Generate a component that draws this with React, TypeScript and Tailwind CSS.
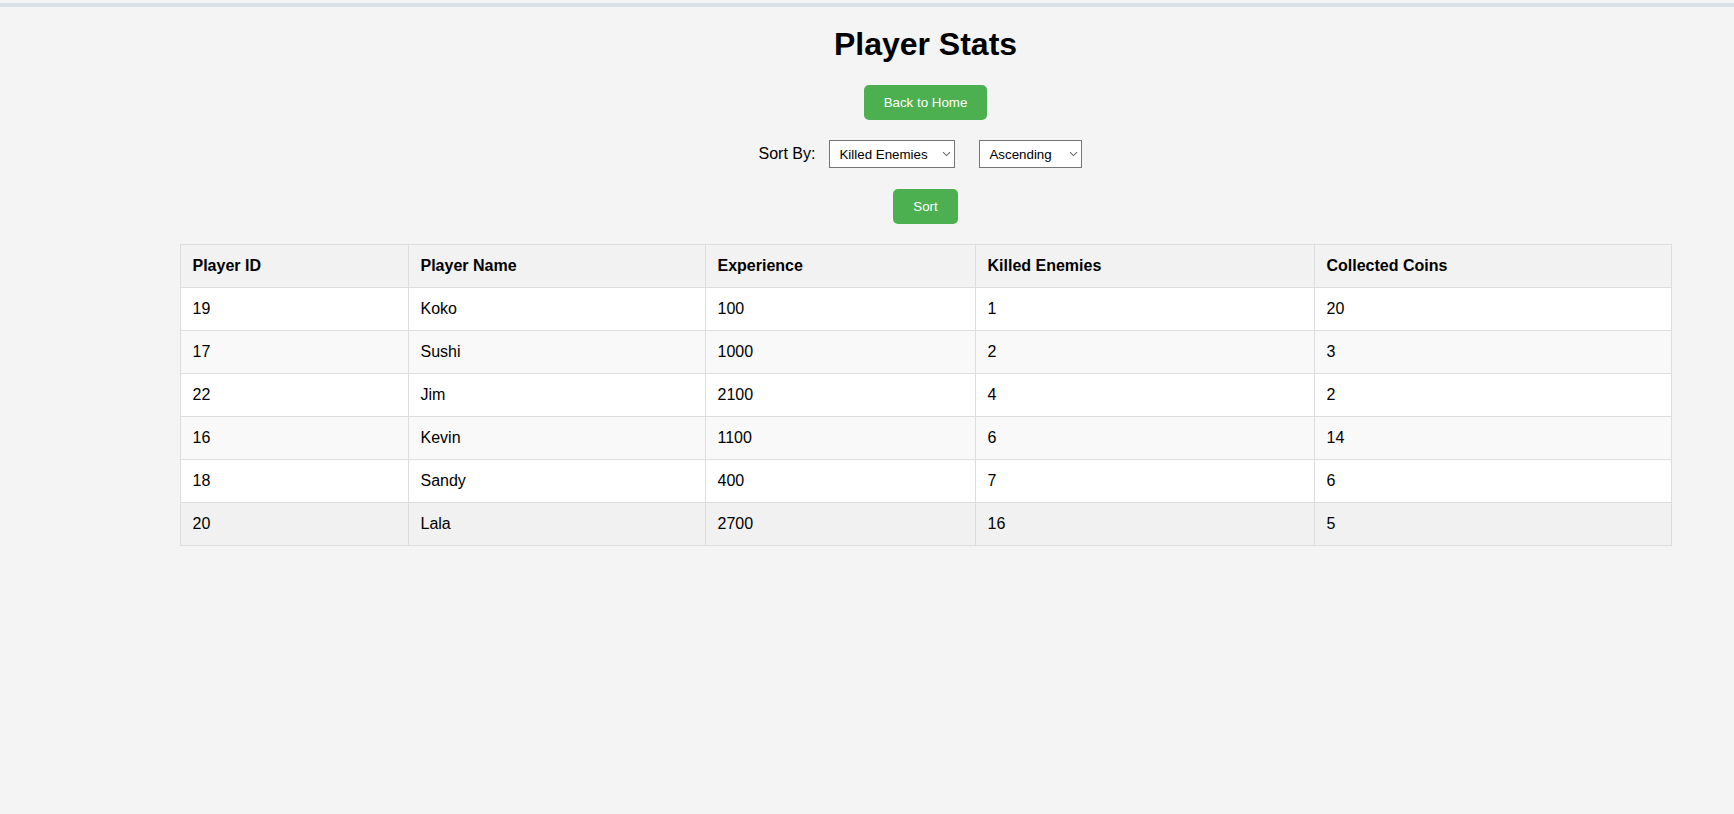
import { useState } from "react";

type Player = {
  id: number;
  name: string;
  experience: number;
  killedEnemies: number;
  collectedCoins: number;
};

const players: Player[] = [
  { id: 19, name: "Koko", experience: 100, killedEnemies: 1, collectedCoins: 20 },
  { id: 17, name: "Sushi", experience: 1000, killedEnemies: 2, collectedCoins: 3 },
  { id: 22, name: "Jim", experience: 2100, killedEnemies: 4, collectedCoins: 2 },
  { id: 16, name: "Kevin", experience: 1100, killedEnemies: 6, collectedCoins: 14 },
  { id: 18, name: "Sandy", experience: 400, killedEnemies: 7, collectedCoins: 6 },
  { id: 20, name: "Lala", experience: 2700, killedEnemies: 16, collectedCoins: 5 },
];

function Chevron() {
  return (
    <svg
      className="pointer-events-none absolute right-[4px] top-1/2 -translate-y-1/2"
      width="9"
      height="6"
      viewBox="0 0 9 6"
      fill="none"
    >
      <path d="M1 1.2L4.5 4.6L8 1.2" stroke="#6b6b6b" strokeWidth="1.1" />
    </svg>
  );
}

export default function App() {
  const [sortBy, setSortBy] = useState("killedEnemies");
  const [order, setOrder] = useState("asc");

  return (
    <div className="min-h-screen bg-[#f4f4f4] font-['Liberation_Sans',Arial,sans-serif] text-black">
      <div className="h-[3px]" />
      <div className="h-[4px] bg-[#d9e1e8]" />
      <div className="pl-[117px] flex flex-col items-center">
        <h1 className="mt-[19px] mb-[22px] text-[32px] leading-[37px] font-bold">Player Stats</h1>

        <button className="px-5 py-[10px] text-[13.33px] leading-[15px] text-white bg-[#4caf50] rounded-[5px]">
          Back to Home
        </button>

        <div className="mt-5 flex items-center h-[28px]">
          <label className="mr-[14px] text-[16px]">Sort By:</label>
          <span className="relative mr-6">
            <select
              value={sortBy}
              onChange={(e) => setSortBy(e.target.value)}
              className="appearance-none block w-[126px] h-[28px] pl-[9px] pt-[1px] text-[13.33px] bg-white border border-[#767676] text-black"
            >
              <option value="experience">Experience</option>
              <option value="killedEnemies">Killed Enemies</option>
              <option value="collectedCoins">Collected Coins</option>
            </select>
            <Chevron />
          </span>
          <span className="relative mr-[10px]">
            <select
              value={order}
              onChange={(e) => setOrder(e.target.value)}
              className="appearance-none block w-[103px] h-[28px] pl-[9px] pt-[1px] text-[13.33px] bg-white border border-[#767676] text-black"
            >
              <option value="asc">Ascending</option>
              <option value="desc">Descending</option>
            </select>
            <Chevron />
          </span>
        </div>

        <button className="mt-[21px] px-5 py-[10px] text-[13.33px] leading-[15px] text-white bg-[#4caf50] rounded-[5px]">
          Sort
        </button>

        <table className="mt-5 w-[1491px] table-fixed border-collapse text-[16px] text-left">
          <colgroup>
            <col className="w-[228px]" />
            <col className="w-[297px]" />
            <col className="w-[270px]" />
            <col className="w-[339px]" />
            <col className="w-[357px]" />
          </colgroup>
          <thead>
            <tr className="bg-[#f2f2f2]">
              <th className="border border-[#ddd] px-3 py-3 leading-[18px] font-bold">Player ID</th>
              <th className="border border-[#ddd] px-3 py-3 leading-[18px] font-bold">Player Name</th>
              <th className="border border-[#ddd] px-3 py-3 leading-[18px] font-bold">Experience</th>
              <th className="border border-[#ddd] px-3 py-3 leading-[18px] font-bold">Killed Enemies</th>
              <th className="border border-[#ddd] px-3 py-3 leading-[18px] font-bold">Collected Coins</th>
            </tr>
          </thead>
          <tbody>
            {players.map((p, i) => (
              <tr
                key={p.id}
                className={i === 5 ? "bg-[#f1f1f1]" : i % 2 === 1 ? "bg-[#f9f9f9]" : "bg-white"}
              >
                <td className="border border-[#ddd] px-3 py-3 leading-[18px]">{p.id}</td>
                <td className="border border-[#ddd] px-3 py-3 leading-[18px]">{p.name}</td>
                <td className="border border-[#ddd] px-3 py-3 leading-[18px]">{p.experience}</td>
                <td className="border border-[#ddd] px-3 py-3 leading-[18px]">{p.killedEnemies}</td>
                <td className="border border-[#ddd] px-3 py-3 leading-[18px]">{p.collectedCoins}</td>
              </tr>
            ))}
          </tbody>
        </table>
      </div>
    </div>
  );
}
